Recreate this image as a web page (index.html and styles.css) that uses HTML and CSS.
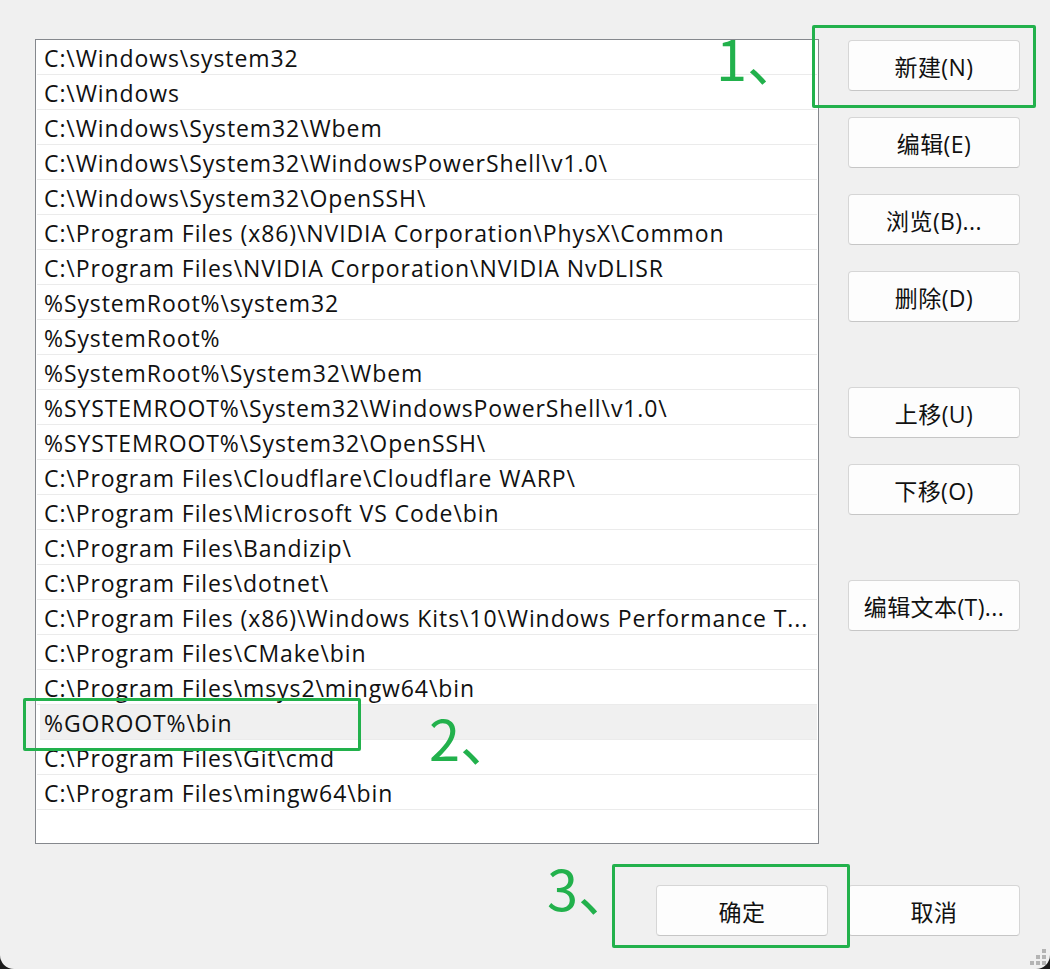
FILE: index.html
```html
<!DOCTYPE html>
<html lang="zh-CN">
<head>
<meta charset="utf-8">
<title>编辑环境变量</title>
<link rel="stylesheet" href="styles.css">
</head>
<body>
<div class="dialog">
  <div class="main">
    <div class="list">
      <div class="row">C:\Windows\system32</div>
      <div class="row">C:\Windows</div>
      <div class="row">C:\Windows\System32\Wbem</div>
      <div class="row">C:\Windows\System32\WindowsPowerShell\v1.0\</div>
      <div class="row">C:\Windows\System32\OpenSSH\</div>
      <div class="row">C:\Program Files (x86)\NVIDIA Corporation\PhysX\Common</div>
      <div class="row">C:\Program Files\NVIDIA Corporation\NVIDIA NvDLISR</div>
      <div class="row">%SystemRoot%\system32</div>
      <div class="row">%SystemRoot%</div>
      <div class="row">%SystemRoot%\System32\Wbem</div>
      <div class="row">%SYSTEMROOT%\System32\WindowsPowerShell\v1.0\</div>
      <div class="row">%SYSTEMROOT%\System32\OpenSSH\</div>
      <div class="row">C:\Program Files\Cloudflare\Cloudflare WARP\</div>
      <div class="row">C:\Program Files\Microsoft VS Code\bin</div>
      <div class="row">C:\Program Files\Bandizip\</div>
      <div class="row">C:\Program Files\dotnet\</div>
      <div class="row">C:\Program Files (x86)\Windows Kits\10\Windows Performance T...</div>
      <div class="row">C:\Program Files\CMake\bin</div>
      <div class="row">C:\Program Files\msys2\mingw64\bin</div>
      <div class="row selected">%GOROOT%\bin</div>
      <div class="row">C:\Program Files\Git\cmd</div>
      <div class="row">C:\Program Files\mingw64\bin</div>
    </div>
    <div class="side">
      <div class="group">
        <button class="btn">新建(N)</button>
        <button class="btn">编辑(E)</button>
        <button class="btn">浏览(B)...</button>
        <button class="btn">删除(D)</button>
      </div>
      <div class="group">
        <button class="btn">上移(U)</button>
        <button class="btn">下移(O)</button>
      </div>
      <div class="group">
        <button class="btn">编辑文本(T)...</button>
      </div>
    </div>
  </div>
  <div class="footer">
    <button class="btn">确定</button>
    <button class="btn">取消</button>
  </div>

  <div class="mark box1"></div>
  <div class="mark box2"></div>
  <div class="mark box3"></div>
  <span class="label lab1">1、</span>
  <span class="label lab2">2、</span>
  <span class="label lab3">3、</span>

  <div class="grip">
    <i class="d d1"></i><i class="d d2"></i><i class="d d3"></i>
    <i class="d d4"></i><i class="d d5"></i><i class="d d6"></i>
  </div>
</div>
</body>
</html>
```
FILE: styles.css
```css
html, body {
  margin: 0;
  padding: 0;
  background: #1c1c1c;
}
body {
  width: 1050px;
  height: 969px;
  overflow: hidden;
  font-family: "Open Sans", "Noto Sans CJK SC", sans-serif;
  color: #111;
}
.dialog {
  position: relative;
  width: 1050px;
  height: 969px;
  box-sizing: border-box;
  background: #f0f0f0;
  border-radius: 0 0 14px 14px;
  padding: 39px 30px 0 35px;
}
.main {
  display: flex;
  align-items: flex-start;
}
.list {
  width: 784px;
  height: 805px;
  box-sizing: border-box;
  border: 1px solid #85888d;
  background: #fff;
  padding: 0 1px;
}
.row {
  height: 35px;
  box-sizing: border-box;
  border-bottom: 1px solid #ebebeb;
  line-height: 33px;
  padding: 2px 0 0 7px;
  font-size: 23px;
  letter-spacing: 0.9px;
  white-space: nowrap;
  overflow: hidden;
}
.row.selected {
  background: #f0f0f0;
  margin-left: 3px;
  padding-left: 4px;
}
.side {
  margin-left: 29px;
  display: flex;
  flex-direction: column;
  gap: 65px;
  padding-top: 1px;
}
.group {
  display: flex;
  flex-direction: column;
  gap: 26px;
}
.btn {
  width: 172px;
  height: 51px;
  box-sizing: border-box;
  background: #fdfdfd;
  border: 1px solid #d6d6d6;
  border-bottom-color: #c6c6c6;
  border-radius: 4px;
  font-family: "Open Sans", "Noto Sans CJK SC", sans-serif;
  font-size: 23px;
  letter-spacing: 0.4px;
  color: #111;
  padding: 0;
  white-space: nowrap;
}
.footer {
  display: flex;
  justify-content: flex-end;
  gap: 20px;
  margin-top: 41px;
}
.mark {
  position: absolute;
  border: 3px solid #22b14c;
  border-radius: 2px;
  box-sizing: border-box;
}
.box1 { left: 812px; top: 25px; width: 224px; height: 83px; }
.box2 { left: 23px; top: 698px; width: 338px; height: 53px; }
.box3 { left: 612px; top: 864px; width: 238px; height: 84px; }
.label {
  position: absolute;
  color: #22b14c;
  font-family: "Noto Sans CJK SC", sans-serif;
  font-weight: 400;
  font-size: 56px;
  line-height: 1;
}
.lab1 { left: 716px; top: 29px; }
.lab2 { left: 429px; top: 709px; }
.lab3 { left: 547px; top: 859px; }
.grip {
  position: absolute;
  right: -4px;
  bottom: -1px;
  width: 24px;
  height: 24px;
}
.d {
  position: absolute;
  width: 4px;
  height: 4px;
  background: #b4b4b4;
}
.d1 { left: 12px; top: 3px; }
.d2 { left: 6px; top: 9px; }
.d3 { left: 12px; top: 9px; }
.d4 { left: 0; top: 15px; }
.d5 { left: 6px; top: 15px; }
.d6 { left: 12px; top: 15px; }
```
